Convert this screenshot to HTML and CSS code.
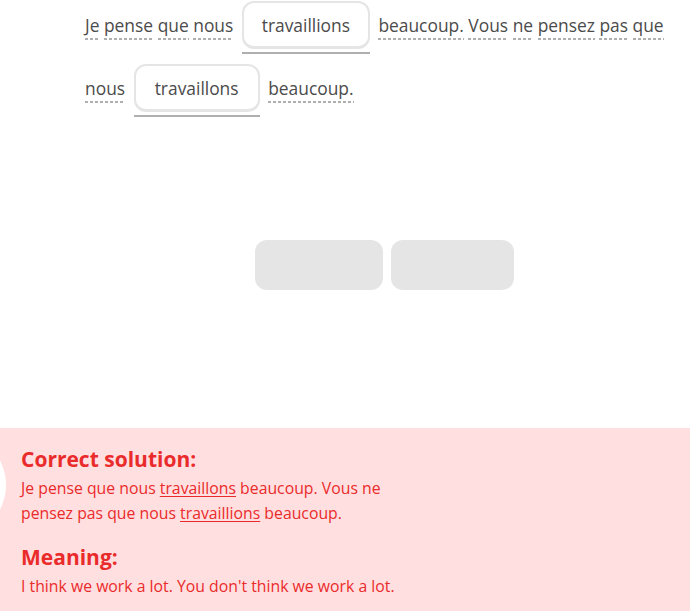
FILE: index.html
```html
<!DOCTYPE html>
<html>
<head>
<meta charset="utf-8">
<link rel="stylesheet" href="styles.css">
</head>
<body>
<div class="page">
  <div class="exercise">
    <div class="sentence">
      <span class="word">Je</span> <span class="word">pense</span> <span class="word">que</span> <span class="word">nous</span> <span class="slot"><span class="chip">travaillions</span></span> <span class="word">beaucoup.</span> <span class="word">Vous</span> <span class="word">ne</span> <span class="word">pensez</span> <span class="word">pas</span> <span class="word">que</span> <span class="word">nous</span> <span class="slot slot2"><span class="chip">travaillons</span></span> <span class="word">beaucoup.</span>
    </div>
    <div class="bank">
      <div class="blank b1"></div>
      <div class="blank b2"></div>
    </div>
  </div>
  <div class="footer">
    <div class="circle"></div>
    <h2 class="title">Correct solution:</h2>
    <p class="body">Je pense que nous <u>travaillons</u> beaucoup. Vous ne<br>pensez pas que nous <u>travaillions</u> beaucoup.</p>
    <h2 class="title t2">Meaning:</h2>
    <p class="body">I think we work a lot. You don't think we work a lot.</p>
  </div>
</div>
</body>
</html>
```
FILE: styles.css
```css
* { box-sizing: border-box; }
html, body { margin: 0; padding: 0; background: #fff; }
body { font-family: "Open Sans", "Noto Sans", sans-serif; width: 690px; height: 611px; overflow: hidden; }
.page { position: relative; width: 690px; height: 611px; display: flex; flex-direction: column; }
.exercise { height: 428px; padding: 0 10px 0 85px; }
.sentence { font-size: 17.4px; line-height: 63px; color: #4b4b4b; margin-top: -6px; width: 590px; }
.word {
  display: inline-block;
  line-height: 22px;
  padding-bottom: 4px;
  background: repeating-linear-gradient(to right, #afafaf 0 3px, transparent 3px 5px) left bottom / 100% 2px no-repeat;
}
.slot {
  display: inline-block;
  vertical-align: middle;
  margin: 0 4px;
  line-height: 20px;
  padding-bottom: 3px;
  border-bottom: 2px solid #afafaf;
}
.chip {
  display: block;
  width: 128px;
  height: 48px;
  line-height: 44px;
  text-align: center;
  border: 2px solid #e5e5e5;
  border-bottom-width: 3px;
  border-radius: 12px;
  background: #fff;
}
.slot2 .chip { width: 126px; }
.bank { display: flex; gap: 8px; justify-content: flex-start; padding-left: 170px; margin-top: 120px; }
.blank { height: 50px; border-radius: 12px; background: #e5e5e5; }
.b1 { width: 128px; }
.b2 { width: 123px; }
.footer { position: relative; flex: 1; background: #ffdfe0; color: #ea2b2b; padding: 17px 21px 0; overflow: hidden; }
.circle { position: absolute; left: -100px; top: 4px; width: 106px; height: 106px; border-radius: 50%; background: #fff; }
.title { margin: 0 0 3px; font-size: 21px; font-weight: 700; line-height: 28px; }
.t2 { margin-top: 17px; }
.body { margin: 0; font-size: 15.8px; line-height: 25px; }
.body u { text-decoration-thickness: 1px; text-underline-offset: 2px; }
```
